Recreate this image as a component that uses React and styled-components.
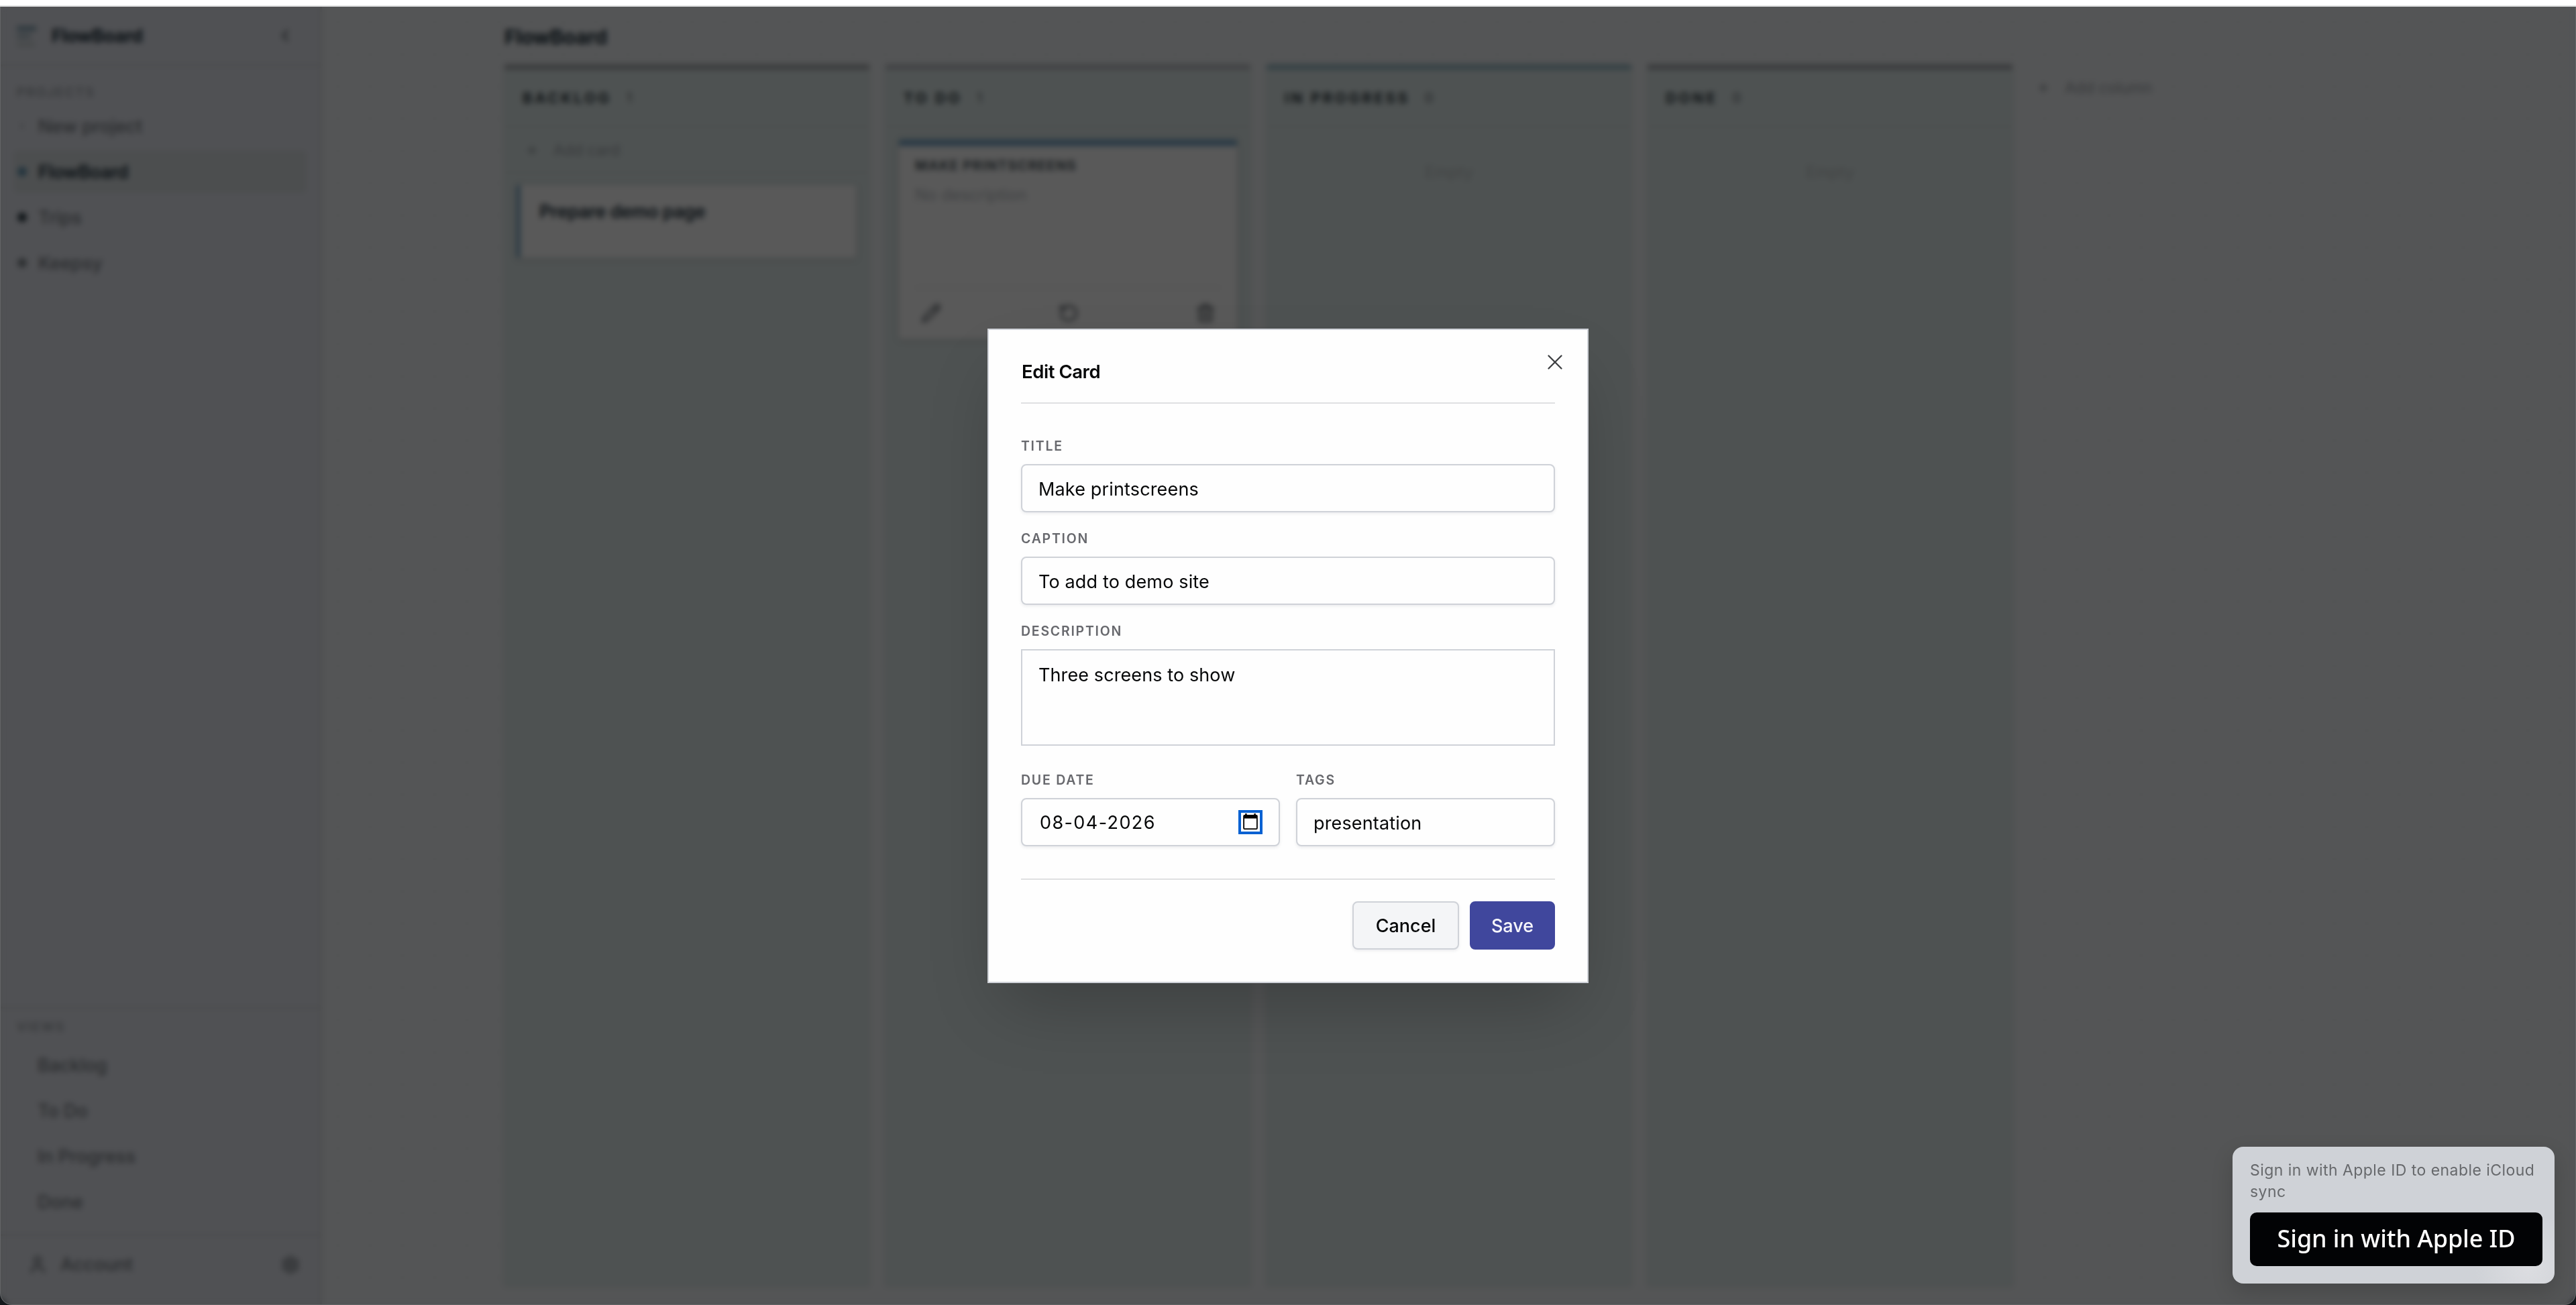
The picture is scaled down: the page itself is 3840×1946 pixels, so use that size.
import React from "react";

import styled, { createGlobalStyle } from "styled-components";
import {
  X,
  Plus,
  ChevronLeft,
  Pencil,
  RotateCcw,
  Trash2,
  User,
  Settings,
} from "lucide-react";

const colors = {
  Ink: "#090f13",
  Muted: "#292b2d",
  Faint: "#37393b",
  Sidebar: "#505154",
  Canvas: "#545556",
  Line: "#4a4b4c",
  Column: "#4e5252",
  Card: "#595959",
  Accent: "#2b3b46",
  Border: "#cfd2d8",
  Primary: "#40479d",
};

const projects = [
  { name: "FlowBoard", dot: "#22343e", active: true },
  { name: "Trips", dot: "#101518" },
  { name: "Keepsy", dot: "#2c2f31" },
];

const views = ["Backlog", "To Do", "In Progress", "Done"];

function Sidebar() {
  return (
    <Side>
      <SideHeader>
        <svg width="30" height="34" viewBox="0 0 30 34">
          <rect x="0" y="1" width="29" height="7" rx="2" fill="#2d383e" />
          <rect x="0" y="13" width="21" height="6" rx="2" fill="#394043" />
          <rect x="0" y="25" width="27" height="6" rx="2" fill="#454848" />
        </svg>
        <Brand>FlowBoard</Brand>
        <ChevronLeft size={28} strokeWidth={3} color={colors.Muted} />
      </SideHeader>
      <SideBody>
        <SideLabel>PROJECTS</SideLabel>
        <SideRow>
          <Plus size={14} color={colors.Faint} />
          New project
        </SideRow>
        {projects.map((p) => (
          <SideRow key={p.name} $active={p.active}>
            <Dot $color={p.dot} />
            {p.name}
          </SideRow>
        ))}
      </SideBody>
      <Views>
        <SideLabel>VIEWS</SideLabel>
        {views.map((v) => (
          <ViewRow key={v}>{v}</ViewRow>
        ))}
      </Views>
      <AccountRow>
        <User size={30} strokeWidth={2.4} />
        <span>Account</span>
        <Settings size={28} strokeWidth={2.4} />
      </AccountRow>
    </Side>
  );
}

function Column({ name, count, color, children }) {
  return (
    <Col $color={color}>
      <ColHeader>
        {name} <span>{count}</span>
      </ColHeader>
      {children}
    </Col>
  );
}

function Board() {
  return (
    <Main>
      <BoardTitle>FlowBoard</BoardTitle>
      <Columns>
        <Column name="BACKLOG" count={1} color="#3b3c3d">
          <AddCard>
            <Plus size={20} strokeWidth={3} /> Add card
          </AddCard>
          <SmallCard>Prepare demo page</SmallCard>
        </Column>
        <Column name="TO DO" count={1} color="#424345">
          <OpenCard>
            <h4>MAKE PRINTSCREENS</h4>
            <p>No description</p>
            <CardActions>
              <Pencil size={30} strokeWidth={2.4} />
              <RotateCcw size={30} strokeWidth={2.4} />
              <Trash2 size={30} strokeWidth={2.4} />
            </CardActions>
          </OpenCard>
        </Column>
        <Column name="IN PROGRESS" count={0} color="#354145">
          <Empty>Empty</Empty>
        </Column>
        <Column name="DONE" count={0} color="#3a3b3d">
          <Empty>Empty</Empty>
        </Column>
        <AddColumn>
          <Plus size={20} strokeWidth={3} /> Add column
        </AddColumn>
      </Columns>
    </Main>
  );
}

function EditCard() {
  return (
    <Modal>
      <ModalHeader>
        <h2>Edit Card</h2>
        <X size={38} strokeWidth={1.5} color="#3f4144" />
      </ModalHeader>
      <Label>TITLE</Label>
      <Field>Make printscreens</Field>
      <Label>CAPTION</Label>
      <Field>To add to demo site</Field>
      <Label>DESCRIPTION</Label>
      <TextArea>Three screens to show</TextArea>
      <Pair>
        <div>
          <Label>DUE DATE</Label>
          <Field>
            <DateText>08-04-2026</DateText>
            <Picker>
              <svg width="24" height="26" viewBox="0 0 24 26">
                <path
                  fillRule="evenodd"
                  d="M4.2 0h2.4v2h10.8V0h2.4v2h1a2 2 0 0 1 2 2v18a2 2 0 0 1-2 2H3.2a2 2 0 0 1-2-2V4a2 2 0 0 1 2-2h1zM3 7.6v14.6h18V7.6z"
                />
              </svg>
            </Picker>
          </Field>
        </div>
        <div>
          <Label>TAGS</Label>
          <Field>presentation</Field>
        </div>
      </Pair>
      <ModalFooter>
        <Button>Cancel</Button>
        <Button $primary>Save</Button>
      </ModalFooter>
    </Modal>
  );
}

export default function App() {
  return (
    <Page>
      <GlobalStyle />
      <TopStrip />
      <Window>
        <Sidebar />
        <Board />
        <Overlay>
          <EditCard />
        </Overlay>
        <Toast>
          <p>Sign in with Apple ID to enable iCloud sync</p>
          <AppleButton>Sign in with Apple ID</AppleButton>
        </Toast>
      </Window>
    </Page>
  );
}

const GlobalStyle = createGlobalStyle`
  * {
    box-sizing: border-box;
  }
  body, h2, h4, p {
    margin: 0;
  }
  body {
    font-family: Inter, "Liberation Sans", sans-serif;
  }
`;

const Page = styled.div`
  display: flex;
  flex-direction: column;
  height: 1946px;
  overflow: hidden;
  background: #14181c;
`;

const TopStrip = styled.div`
  height: 10px;
  flex: none;
  background: #ffffff;
  border-bottom: 2px solid #dfe0e0;
`;

const Window = styled.div`
  position: relative;
  display: flex;
  flex: 1;
  overflow: hidden;
  border-radius: 0 0 18px 18px;
`;

const Side = styled.aside`
  display: flex;
  flex-direction: column;
  width: 480px;
  background: ${colors.Sidebar};
  border-right: 3px solid ${colors.Line};
  color: ${colors.Muted};
  font-size: 27px;
  font-weight: 500;
`;

const SideHeader = styled.div`
  display: flex;
  align-items: center;
  height: 89px;
  padding: 0 38px 0 25px;
  border-bottom: 3px solid ${colors.Line};

  > svg:first-child {
    margin-top: 4px;
  }
`;

const Brand = styled.div`
  flex: 1;
  margin-left: 22px;
  color: ${colors.Ink};
  font-size: 27px;
  font-weight: 700;
  letter-spacing: -0.5px;
`;

const SideBody = styled.div`
  display: flex;
  flex: 1;
  flex-direction: column;
  gap: 4px;
  padding: 25px 20px 0;
`;

const SideLabel = styled.div`
  height: 28px;
  padding-left: 5px;
  color: ${colors.Faint};
  font-size: 19px;
  font-weight: 600;
  line-height: 28px;
  letter-spacing: 2px;
`;

const SideRow = styled.div`
  display: flex;
  align-items: center;
  gap: 17px;
  height: 64px;
  padding-left: 6px;
  border-radius: 8px;
  background: ${(p) => (p.$active ? "#4c4e4f" : "transparent")};
  color: ${(p) => (p.$active ? colors.Ink : colors.Muted)};
  font-weight: ${(p) => (p.$active ? 600 : 500)};
  letter-spacing: ${(p) => (p.$active ? "-0.5px" : "-0.05px")};
`;

const Dot = styled.span`
  width: 14px;
  height: 14px;
  border-radius: 50%;
  background: ${(p) => p.$color};
`;

const Views = styled.div`
  padding: 14px 20px;
  border-top: 3px solid ${colors.Line};

  ${SideLabel} {
    margin-bottom: 8px;
  }
`;

const ViewRow = styled.div`
  height: 68px;
  padding-left: 36px;
  line-height: 69px;
`;

const AccountRow = styled.div`
  display: flex;
  align-items: center;
  height: 106px;
  padding: 0 30px 18px 41px;
  border-top: 3px solid ${colors.Line};

  span {
    flex: 1;
    margin-left: 19px;
  }
`;

const Main = styled.main`
  display: flex;
  flex: 1;
  flex-direction: column;
  padding: 24px 0 28px 272px;
  background: radial-gradient(circle, #505152 2px, transparent 3px) 0 -1px / 48px
      48px,
    ${colors.Canvas};
`;

const BoardTitle = styled.div`
  height: 62px;
  color: ${colors.Ink};
  font-size: 30px;
  font-weight: 700;
  line-height: 42px;
  letter-spacing: -0.3px;
`;

const Columns = styled.div`
  display: flex;
  flex: 1;
  gap: 24px;
`;

const Col = styled.section`
  width: 544px;
  border-top: 8px solid ${(p) => p.$color};
  border-radius: 4px;
  background: ${colors.Column};
  box-shadow: 0 0 4px #494b4b;
`;

const ColHeader = styled.div`
  display: flex;
  gap: 22px;
  height: 86px;
  padding-left: 27px;
  border-bottom: 2px solid #4b4e4e;
  color: #101416;
  font-size: 22px;
  font-weight: 700;
  line-height: 84px;
  letter-spacing: 3.6px;

  span {
    color: ${colors.Muted};
    font-size: 20px;
    font-weight: 500;
  }
`;

const AddCard = styled.div`
  display: flex;
  align-items: center;
  gap: 22px;
  height: 68px;
  padding: 2px 0 0 31px;
  border-bottom: 2px solid #4b4e4e;
  color: ${colors.Faint};
  font-size: 23px;
`;

const SmallCard = styled.div`
  height: 108px;
  margin: 18px 20px 0 18px;
  padding: 24px 28px;
  border-left: 6px solid ${colors.Accent};
  border-radius: 4px;
  background: ${colors.Card};
  box-shadow: 0 2px 8px #474848;
  color: ${colors.Ink};
  font-size: 27px;
  font-weight: 600;
  line-height: 32px;
  letter-spacing: -0.45px;
`;

const OpenCard = styled.div`
  display: flex;
  flex-direction: column;
  height: 297px;
  margin: 18px 20px 0;
  padding: 17px 24px 0;
  border-top: 10px solid ${colors.Accent};
  border-radius: 4px;
  background: ${colors.Card};
  box-shadow: 0 2px 8px #474848;

  h4 {
    color: #1b1f22;
    font-size: 20px;
    font-weight: 700;
    line-height: 24px;
    letter-spacing: 1.3px;
  }
  p {
    flex: 1;
    margin-top: 17px;
    color: #3f4143;
    font-size: 24px;
  }
`;

const CardActions = styled.div`
  display: flex;
  align-items: center;
  justify-content: space-between;
  height: 77px;
  padding: 0 8px 2px 9px;
  border-top: 2px solid #515151;
  color: #252729;
`;

const Empty = styled.div`
  margin-top: 52px;
  color: #424444;
  font-size: 24px;
  text-align: center;
`;

const AddColumn = styled.div`
  display: flex;
  align-items: center;
  gap: 22px;
  height: 69px;
  margin-left: 12px;
  color: ${colors.Faint};
  font-size: 23px;
`;

const Overlay = styled.div`
  position: absolute;
  inset: 0;
  display: flex;
  align-items: center;
  justify-content: center;
  border: 1px solid #636567;
  border-top: none;
  border-radius: 0 0 18px 18px;
  backdrop-filter: blur(4px);
`;

const Modal = styled.div`
  width: 896px;
  height: 976px;
  padding: 0 48px;
  border: 2px solid ${colors.Border};
  background: #fefefe;
  box-shadow: 0 50px 100px -24px rgba(0, 0, 0, 0.23);
`;

const Label = styled.div`
  height: 24px;
  margin-bottom: 14px;
  color: #67686d;
  font-size: 19.5px;
  font-weight: 600;
  line-height: 23px;
  letter-spacing: 1.75px;
`;

const Field = styled.div`
  display: flex;
  align-items: center;
  justify-content: space-between;
  height: 72px;
  margin-bottom: 28px;
  padding: 3px 24px 0;
  border: 2px solid ${colors.Border};
  border-radius: 8px;
  background: #fefefe;
  box-shadow: 0 2px 4px rgba(40, 50, 80, 0.09);
  color: #060708;
  font-size: 27px;
  letter-spacing: 0.15px;
`;

const TextArea = styled.div`
  height: 144px;
  margin-bottom: 40px;
  padding: 19px 24px;
  border: 2px solid ${colors.Border};
  color: #060708;
  font-size: 27px;
  line-height: 36px;
  letter-spacing: 0.1px;
`;

const ModalHeader = styled.div`
  display: flex;
  justify-content: space-between;
  height: 110px;
  margin-bottom: 52px;
  border-bottom: 2px solid #dfe0e2;

  h2 {
    padding: 44px 0 0 1px;
    color: #060708;
    font-size: 27.5px;
    font-weight: 600;
    line-height: 36px;
    letter-spacing: -0.45px;
  }
  svg {
    margin: 29px -19px 0 0;
  }
`;

const Pair = styled.div`
  display: grid;
  grid-template-columns: 1fr 1fr;
  gap: 24px;
`;

const DateText = styled.span`
  padding: 0 0 2px 2px;
  letter-spacing: 1.4px;
`;

const Picker = styled.span`
  display: flex;
  align-items: center;
  justify-content: center;
  width: 36px;
  height: 36px;
  margin-top: -3px;
  border: 4px solid #0561d2;
`;

const ModalFooter = styled.div`
  display: flex;
  justify-content: flex-end;
  gap: 16px;
  margin-top: 20px;
  padding-top: 32px;
  border-top: 2px solid #dfe0e2;
`;

const Button = styled.div`
  width: ${(p) => (p.$primary ? "127px" : "159px")};
  height: 72px;
  border: 2px solid ${(p) => (p.$primary ? colors.Primary : colors.Border)};
  border-radius: 8px;
  background: ${(p) => (p.$primary ? colors.Primary : "#f4f5f7")};
  box-shadow: 0 2px 4px rgba(40, 50, 80, ${(p) => (p.$primary ? 0 : 0.09)});
  color: ${(p) => (p.$primary ? "#f6f6fb" : "#060708")};
  font-size: 27px;
  font-weight: 500;
  line-height: 70px;
  text-align: center;
`;

const Toast = styled.div`
  position: absolute;
  right: 32px;
  bottom: 32px;
  width: 480px;
  height: 204px;
  padding: 18px 18px 26px 26px;
  border-radius: 16px;
  background: radial-gradient(
      circle at 92% 88%,
      #dcdde1 0,
      #cfd2d7 80px
    )
    #cfd2d7;
  box-shadow: 0 12px 32px rgba(0, 0, 0, 0.16);
  color: #67696c;
  font-size: 23px;
  line-height: 32px;
  letter-spacing: 0.45px;

  p {
    padding-top: 1px;
  }
`;

const AppleButton = styled.div`
  height: 80px;
  margin-top: 15px;
  border-radius: 10px;
  background: #020305;
  color: #ffffff;
  font-family: "Noto Sans", sans-serif;
  font-size: 36px;
  font-weight: 500;
  line-height: 78px;
  letter-spacing: -0.1px;
  text-align: center;
`;
